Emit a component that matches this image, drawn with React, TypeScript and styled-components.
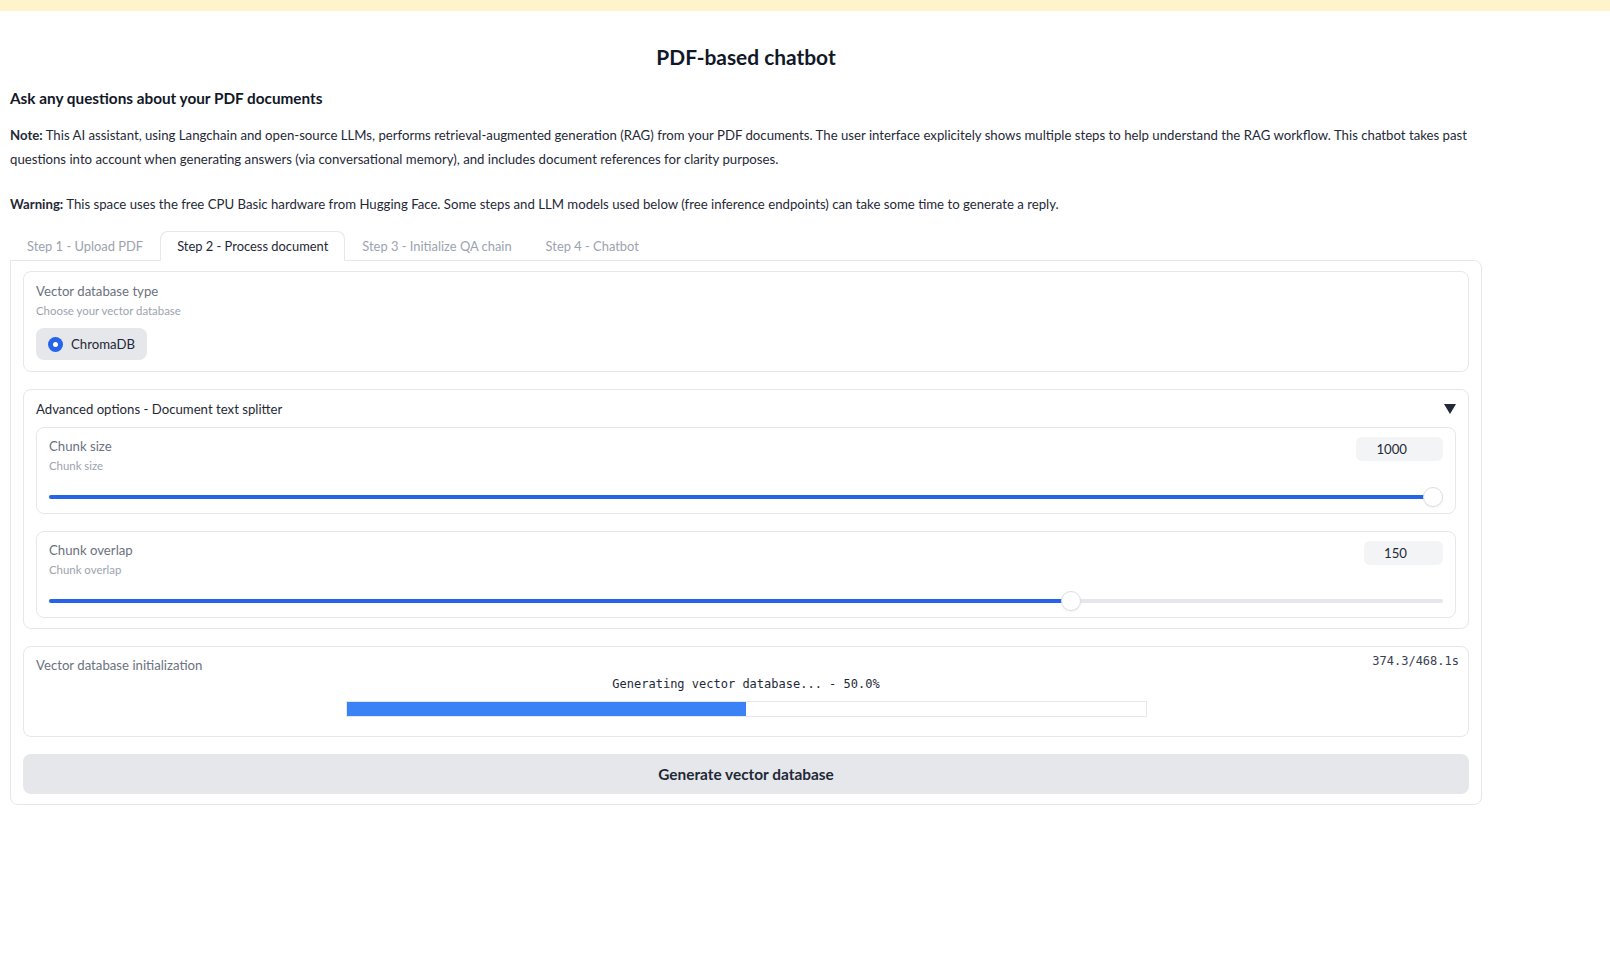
import React from "react";
import styled, { createGlobalStyle } from "styled-components";

const GlobalStyle = createGlobalStyle`
  * { box-sizing: border-box; }
  body {
    margin: 0;
    background: #ffffff;
    font-family: Lato, "Noto Sans", sans-serif;
    color: #1f2937;
  }
`;

const TopBar = styled.div`
  height: 11px;
  background: #fff3cc;
`;

const Main = styled.main`
  width: 1472px;
  margin-left: 10px;
`;

const Title = styled.h1`
  margin: 31px 0 0;
  font-size: 20.9px;
  line-height: 29px;
  font-weight: 700;
  text-align: center;
  color: #111827;
`;

const Subtitle = styled.h3`
  margin: 16px 0 0;
  font-size: 15.3px;
  line-height: 22px;
  font-weight: 700;
  color: #111827;
`;

const Prose = styled.p<{ $gap: number }>`
  margin: ${(p) => p.$gap}px -10px 0 0;
  font-size: 13.2px;
  line-height: 23.5px;
  color: #1f2937;
  b { font-weight: 700; }
`;

const TabList = styled.div`
  display: flex;
  height: 29px;
  margin-top: 15px;
`;

const Tab = styled.button<{ $active?: boolean }>`
  position: relative;
  z-index: 1;
  height: ${(p) => (p.$active ? "30px" : "29px")};
  padding: 0 16px;
  border: 1px solid ${(p) => (p.$active ? "#e5e7eb" : "transparent")};
  border-bottom-color: ${(p) => (p.$active ? "#ffffff" : "transparent")};
  border-radius: 8px 8px 0 0;
  background: #ffffff;
  font-family: inherit;
  font-size: 12.9px;
  color: ${(p) => (p.$active ? "#1f2937" : "#9ca3af")};
  cursor: pointer;
`;

const Panel = styled.section`
  display: flex;
  flex-direction: column;
  gap: 17px;
  padding: 10px 12px 10px;
  border: 1px solid #e5e7eb;
  border-radius: 0 8px 8px 8px;
`;

const Block = styled.div<{ $pad?: string }>`
  position: relative;
  border: 1px solid #e5e7eb;
  border-radius: 8px;
  padding: ${(p) => p.$pad || "10px 12px"};
  background: #ffffff;
`;

const Label = styled.div<{ $dark?: boolean }>`
  font-size: 13.2px;
  line-height: 18px;
  color: ${(p) => (p.$dark ? "#1f2937" : "#6b7280")};
`;

const Info = styled.div`
  margin-top: 3px;
  font-size: 11.4px;
  line-height: 16px;
  color: #9ca3af;
`;

const RadioPill = styled.label`
  display: inline-flex;
  align-items: center;
  gap: 8px;
  height: 32px;
  margin-top: 9px;
  padding: 0 12px;
  border-radius: 8px;
  background: #e5e7eb;
  font-size: 13.2px;
  color: #1f2937;
`;

const RadioDot = styled.span`
  width: 15px;
  height: 15px;
  border-radius: 50%;
  background: #2563eb;
  display: flex;
  align-items: center;
  justify-content: center;
  &::after {
    content: "";
    width: 5px;
    height: 5px;
    border-radius: 50%;
    background: #ffffff;
  }
`;

const AccordionHeader = styled.div`
  display: flex;
  align-items: center;
  justify-content: space-between;
  margin-bottom: 9px;
`;

const InnerStack = styled.div`
  display: flex;
  flex-direction: column;
  gap: 17px;
`;

const SliderHead = styled.div`
  display: flex;
  justify-content: space-between;
  align-items: flex-start;
`;

const NumberBox = styled.div`
  height: 24px;
  padding: 0 36px 0 20px;
  border-radius: 6px;
  background: #f3f4f6;
  font-size: 13.2px;
  line-height: 24px;
  color: #1f2937;
`;

const SliderArea = styled.div`
  position: relative;
  height: 20px;
  margin-top: 13px;
`;

const Track = styled.div`
  position: absolute;
  left: 0;
  right: 0;
  top: 8px;
  height: 4px;
  border-radius: 2px;
  background: #e5e7eb;
`;

const Fill = styled.div`
  height: 100%;
  border-radius: 2px;
  background: #2563eb;
`;

const Thumb = styled.div`
  position: absolute;
  top: 0;
  width: 20px;
  height: 20px;
  margin-left: -10px;
  border-radius: 50%;
  background: #ffffff;
  border: 1px solid #dcdee2;
  box-shadow: 0 1px 2px rgba(0, 0, 0, 0.06);
`;

const Timer = styled.div`
  position: absolute;
  top: 6px;
  right: 9px;
  font-family: "DejaVu Sans Mono", monospace;
  font-size: 12px;
  line-height: 16px;
  color: #374151;
`;

const ProgressText = styled.div`
  margin-top: 2px;
  text-align: center;
  font-family: "DejaVu Sans Mono", monospace;
  font-size: 12px;
  line-height: 16px;
  color: #1f2937;
`;

const ProgressWrap = styled.div`
  width: 801px;
  height: 16px;
  margin: 9px auto 0;
  border: 1px solid #e5e7eb;
  background: #ffffff;
`;

const ProgressFill = styled.div`
  height: 100%;
  background: #3b82f6;
`;

const BigButton = styled.button`
  height: 40px;
  border: none;
  border-radius: 8px;
  background: #e5e7eb;
  font-family: inherit;
  font-size: 15.4px;
  font-weight: 700;
  color: #1f2937;
  cursor: pointer;
`;

type SliderProps = { label: string; value: number; min: number; max: number };

function SliderBlock({ label, value, min, max }: SliderProps) {
  const pct = (value - min) / (max - min);
  const pos = `calc(10px + (100% - 20px) * ${pct})`;
  return (
    <Block $pad="9px 12px 6px">
      <SliderHead>
        <div>
          <Label>{label}</Label>
          <Info>{label}</Info>
        </div>
        <NumberBox>{value}</NumberBox>
      </SliderHead>
      <SliderArea>
        <Track>
          <Fill style={{ width: pos }} />
        </Track>
        <Thumb style={{ left: pos }} />
      </SliderArea>
    </Block>
  );
}

export default function App() {
  return (
    <>
      <GlobalStyle />
      <TopBar />
      <Main>
        <Title>PDF-based chatbot</Title>
        <Subtitle>Ask any questions about your PDF documents</Subtitle>
        <Prose $gap={15}>
          <b>Note:</b> This AI assistant, using Langchain and open-source LLMs, performs retrieval-augmented
          generation (RAG) from your PDF documents. The user interface explicitely shows multiple steps to help
          understand the RAG workflow. This chatbot takes past
          <br />
          questions into account when generating answers (via conversational memory), and includes document
          references for clarity purposes.
        </Prose>
        <Prose $gap={21.5}>
          <b>Warning:</b> This space uses the free CPU Basic hardware from Hugging Face. Some steps and LLM models
          used below (free inference endpoints) can take some time to generate a reply.
        </Prose>
        <TabList>
          <Tab>Step 1 - Upload PDF</Tab>
          <Tab $active>Step 2 - Process document</Tab>
          <Tab>Step 3 - Initialize QA chain</Tab>
          <Tab>Step 4 - Chatbot</Tab>
        </TabList>
        <Panel>
          <Block $pad="10px 12px 11px">
            <Label>Vector database type</Label>
            <Info>Choose your vector database</Info>
            <RadioPill>
              <RadioDot />
              ChromaDB
            </RadioPill>
          </Block>
          <Block>
            <AccordionHeader>
              <Label $dark>Advanced options - Document text splitter</Label>
              <svg width="12" height="10" viewBox="0 0 12 10" aria-hidden="true">
                <polygon points="0,0 12,0 6,10" fill="#1f2937" />
              </svg>
            </AccordionHeader>
            <InnerStack>
              <SliderBlock label="Chunk size" value={1000} min={100} max={1000} />
              <SliderBlock label="Chunk overlap" value={150} min={10} max={200} />
            </InnerStack>
          </Block>
          <Block $pad="9px 12px 19px">
            <Label>Vector database initialization</Label>
            <Timer>374.3/468.1s</Timer>
            <ProgressText>Generating vector database... - 50.0%</ProgressText>
            <ProgressWrap>
              <ProgressFill style={{ width: "50%" }} />
            </ProgressWrap>
          </Block>
          <BigButton>Generate vector database</BigButton>
        </Panel>
      </Main>
    </>
  );
}
